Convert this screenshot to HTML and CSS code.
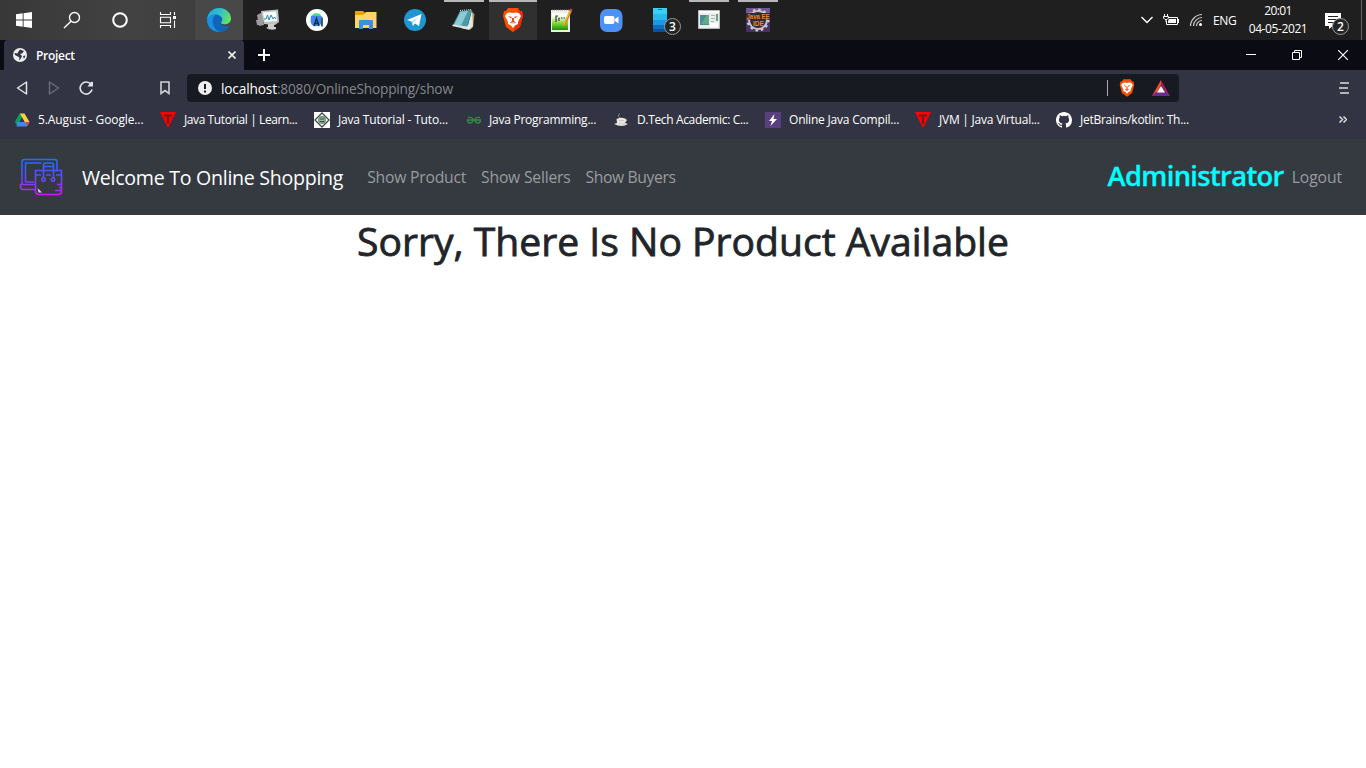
FILE: index.html
```html
<!DOCTYPE html>
<html lang="en">
<head>
<meta charset="utf-8">
<title>Project</title>
<link rel="stylesheet" href="styles.css">
</head>
<body>
<header class="taskbar">
  <div class="system-buttons">
    <span class="task"><svg width="16" height="16" viewBox="0 0 16 16" fill="#fff"><path d="M0 2.3 6.7 1.3V7.5H0zM7.6 1.2 16 0V7.5H7.6zM0 8.5H6.7V14.7L0 13.7zM7.6 8.5H16V16L7.6 14.8z"/></svg></span>
    <span class="task"><svg width="18" height="18" viewBox="0 0 18 18" fill="none" stroke="#fff" stroke-width="1.4"><circle cx="11.5" cy="6.5" r="5"/><path d="M8 10.2 1 17"/></svg></span>
    <span class="task"><svg width="18" height="18" viewBox="0 0 18 18" fill="none" stroke="#fff" stroke-width="2"><circle cx="9" cy="9" r="6.8"/></svg></span>
    <span class="task"><svg width="18" height="16" viewBox="0 0 18 16" fill="none" stroke="#fff" stroke-width="1.1"><path d="M1.5 0V2.5H11.5V0M1.5 16V13.5H11.5V16M1.5 5.2H11.5V10.8H1.5zM15.5 0V3M15.5 8.5V16"/><path fill="#fff" stroke="none" d="M14 4H17V7H14z"/></svg></span>
  </div>
  <div class="apps">
    <span class="task lit-edge"><svg width="24" height="24" viewBox="0 0 24 24"><defs><linearGradient id="eg" x1="0" y1=".2" x2="1" y2=".5"><stop offset="0" stop-color="#1ca9e3"/><stop offset=".55" stop-color="#35c1c7"/><stop offset="1" stop-color="#66e45b"/></linearGradient></defs><circle cx="12" cy="12" r="12" fill="#0f65b8"/><path fill="#1d8ee0" d="M0 12C1 7 5 6 9 6.5 6 9 5 12 6 16 7 20 10 23 13 24 5 24 0 19 0 12"/><path fill="url(#eg)" d="M0 11.5C1 4 6 0 12 0 19 0 24 5 24 10.5 24 15 20 17 16.5 16.3 14 16 13.5 15 14.4 13.9 17 11 14 7 9 6.5 5 6.2 1.5 8 0 11.5"/><path fill="#484848" d="M13.8 14.7C13.5 17.5 18 19.5 22.6 17.5L24 18V13C22 16 19 17 16.5 16.5 14.7 16 13.8 15.5 13.8 14.7"/></svg></span>
    <span class="task"><svg width="24" height="24" viewBox="0 0 24 24"><path fill="#9b9d9c" d="M1 7 6 4.5 8 17 3 18zM0 12 7 11 8 17 1 17z"/><path fill="#bfc2c3" d="M5 3 22 1.5 23 14 19 17 8 16z"/><path fill="#f9fcfd" d="M7 4.5 20 3.5 21 13 8.5 14z"/><path fill="none" stroke="#2687b8" stroke-width="1" d="M8 11H10L11.5 7 13 12 15 7 17 11 18.5 9 20 11"/><path fill="#ccc" d="M12 16H18V19H20V21Q15 23 10 20L12 19z"/></svg></span>
    <span class="task"><svg width="24" height="24" viewBox="0 0 24 24"><circle cx="12" cy="12" r="11" fill="#fff"/><path fill="#3ddc84" d="M6 8.500Q9 3.500 15 6L17 9H7z"/><path fill="#4285f4" d="M6 8H16.500V16Q11 20 7 17L5.5 14z"/><path fill="none" stroke="#073042" stroke-width="1.5" d="M9 18 11.500 10.5 14 18M10 15.5H13M17 9.5V18.5"/></svg></span>
    <span class="task"><svg width="24" height="24" viewBox="0 0 24 24"><path fill="#e7a200" d="M1 3H9L11 5V9H1z"/><path fill="#ffd665" d="M1 7H9L12 4H22.5V20H1z"/><path fill="#3b91d7" d="M5 13Q5 12 6 12H18Q19 12 19 13V21H15V17H9V21H5z"/></svg></span>
    <span class="task"><svg width="24" height="24" viewBox="0 0 24 24"><circle cx="12" cy="12" r="11" fill="#1e96d2"/><path fill="#fff" d="M4 12 18.5 6 16 18 12 15.5 10 18 8.5 13.5z"/><path fill="#b9d9ec" d="M8.5 13.5 15.8 8.8 10.4 14.4 10 18z"/></svg></span>
    <span class="task running"><svg width="24" height="24" viewBox="0 0 24 24"><path fill="#b09a5a" d="M20 4 22.5 6 21 19 18 22z"/><path fill="#dfe9ea" d="M20 2 21 18 17 22 9 20 16 17z"/><path fill="#4b9ba8" d="M8 3 20 2 15 19 1 17z"/><path fill="#8accd4" d="M8.5 4 16 3 9 17.5 2 17z"/><path fill="#dfe5e4" d="M1 16.5 15 18.5 14 21 0 18z"/><path stroke="#dde5e4" stroke-dasharray="1 1" d="M8 2.5 20 1.5"/></svg></span>
    <span class="task running lit-brave"><svg width="24" height="24" viewBox="0 0 24 24"><path fill="#ff5000" d="M7 0H17L19 3 21 3 22 8 19 19 12 24 5 19 2 8 3 3 5 3z"/><path fill="#e51b00" d="M17 0 19 3 21 3 22 8 19 19 12 24 15 13z" opacity=".6"/><path fill="#fff" d="M6 5 9 4.5 12 5 15 4.5 18 5 20 8 17 14 17 16 14 17.5 12 20 10 17.5 7 16 7 14 4 8z"/><path fill="#f04818" d="M7 8 11 9 10 10.5zM17 8 13 9 14 10.5zM11 10H13L13 13 15 14.5 12 16 9 14.5 11 13z"/><path fill="#fff" d="M10 14.5H14L12 16z"/></svg></span>
    <span class="task"><svg width="24" height="24" viewBox="0 0 24 24"><defs><linearGradient id="np" x1="0" y1="0" x2="0" y2="1"><stop offset=".2" stop-color="#f8fff5"/><stop offset=".55" stop-color="#96dd48"/><stop offset="1" stop-color="#149600"/></linearGradient></defs><path fill="#eee" d="M1 2H20V24H1z"/><path fill="url(#np)" d="M2 5H18V22H2z"/><path stroke="#888" stroke-dasharray="1 1" d="M2 2H19"/><path fill="none" stroke="#333" stroke-width="1.2" d="M6 14V8H8M9 9.5V13M11 10H12.500M13.500 10H15"/><path stroke="#d58a10" stroke-width="2.5" d="M14 18 21 2"/><path stroke="#fbc14d" d="M13.6 17 20 3"/><path stroke="#b94a51" stroke-width="2.5" d="M20.5 3 21.5 1"/></svg></span>
    <span class="task"><svg width="24" height="24" viewBox="0 0 24 24"><rect x="1" y="1" width="22.5" height="23" rx="7" fill="#4b91f7"/><rect x="5" y="8" width="10.5" height="8" rx="2" fill="#fff"/><path fill="#fff" d="M16 11 19.5 8.5V15.5L16 13z"/></svg></span>
    <span class="task badge-host"><svg width="24" height="24" viewBox="0 0 24 24"><path fill="#38d0f4" d="M5 0H19V6H5z"/><path fill="#28b8ed" d="M5 6H19V12H5z"/><path fill="#1b98df" d="M5 12H19V17H5z"/><path fill="#0c6fc4" d="M5 17H19V21H5z"/><path fill="#07529b" d="M5 21H19V24H5z"/><path stroke="#087bad" d="M10 1.5H14"/></svg><b class="badge">3</b></span>
    <span class="task running"><svg width="24" height="24" viewBox="0 0 24 24"><path fill="#ececec" stroke="#b9b9b9" d="M1.5 2.5H22.5V20.5H1.5z"/><path fill="#fff" d="M2 3H22V5H2z"/><path fill="#4a8c9c" d="M3 7H12V17H3z"/><path fill="#65ab86" d="M4 16 10 7H12V16z"/><path stroke="#a6b4bd" d="M14 7.5H18M14 10.5H18M14 13.5H17"/><path stroke="#388e59" stroke-width="1.5" d="M20 6V13"/><path fill="#fff" d="M13 15H21V19H13z"/></svg></span>
    <span class="task running"><svg class="javaee" width="24" height="24" viewBox="0 0 24 24"><path fill="#473168" d="M0 0H24V24H0z"/><path fill="#745798" d="M0 0H24V5L0 8z"/><circle cx="12" cy="12" r="9" fill="#302b35" stroke="#c5c5c8" stroke-width="2"/><circle cx="12" cy="12" r="10.5" fill="none" stroke="#d2d2d5" stroke-width="2" stroke-dasharray="2.4 3.1"/><path fill="#352b32" d="M0 5H24V11.5H0zM6 11H18V18H6z"/><g fill="#ef8428" font-family="Liberation Sans,sans-serif" font-weight="bold"><text x=".5" y="11.2" font-size="7" textLength="23" lengthAdjust="spacingAndGlyphs">Java EE</text><text x="7" y="17.5" font-size="7.5" textLength="11" lengthAdjust="spacingAndGlyphs">IDE</text></g></svg></span>
  </div>
  <div class="tray">
    <svg class="tray-icon" width="12" height="8" viewBox="0 0 12 8" fill="none" stroke="#fff" stroke-width="1.4"><path d="M.5 1 6 6.5 11.5 1"/></svg>
    <svg class="tray-icon" width="16" height="12" viewBox="0 0 16 12" fill="none" stroke="#fff"><path d="M5 3.5H14.5V10.5H3.5V7M15.5 5V9M1.5 0V2M4.5 0V2M.5 2.5H5.5V4L4 5.5H2L.5 4zM3 5.5V8"/><path fill="#fff" stroke="none" d="M6 5H13V9H5V7z"/></svg>
    <svg class="tray-icon" width="14" height="14" viewBox="0 0 14 14" fill="none" stroke="#ccc" stroke-width="1.2"><path d="M1.5 13C1.5 7 7 1.5 13 1.5M4.5 13C4.5 8.5 8.5 4.5 13 4.5M7.5 13C7.5 10 10 7.5 13 7.5"/><circle cx="11.5" cy="11.5" r="1.5" fill="#fff" stroke="none"/></svg>
    <span class="t t-eng">ENG</span>
    <div class="clock"><span class="t t-time">20:01</span><span class="t t-date">04-05-2021</span></div>
    <span class="notice badge-host"><svg width="17" height="17" viewBox="0 0 17 17"><path fill="#fff" d="M0 1H16V14H8L4 17V14H0z"/><path stroke="#222" d="M3 4.5H13M3 7.5H13M3 10.5H10"/></svg><b class="badge">2</b></span>
  </div>
</header>

<div class="tabstrip">
  <div class="tab">
    <svg width="14" height="14" viewBox="0 0 14 14"><circle cx="7" cy="7" r="7" fill="#eee"/><path fill="#323443" d="M7 1.5 11 3 9 5.5 7 6 9 8 8 10.5 6 12.5 6.5 9.5 2 7 1.5 5 4.5 5.5 5.5 3.5zM10 8 12.5 7.5 11 11z"/></svg>
    <span class="t t-tab">Project</span>
    <svg class="tab-close" width="8" height="8" viewBox="0 0 8 8" stroke="#eee" stroke-width="1.6"><path d="M.5 .5 7.5 7.5M7.5 .5 .5 7.5"/></svg>
  </div>
  <svg class="new-tab" width="12" height="12" viewBox="0 0 12 12" stroke="#fff" stroke-width="2"><path d="M6 0V12M0 6H12"/></svg>
  <div class="window-buttons">
    <svg width="10" height="10" viewBox="0 0 10 10" stroke="#fff"><path d="M0 4.5H10"/></svg>
    <svg width="10" height="10" viewBox="0 0 10 10" stroke="#fff" fill="none"><path d="M.5 2.5H7.5V9.5H.5zM2.5 2.5V.5H9.5V7.5H7.5"/></svg>
    <svg width="10" height="10" viewBox="0 0 10 10" stroke="#fff" stroke-width="1.2"><path d="M0 0 10 10M10 0 0 10"/></svg>
  </div>
</div>

<div class="toolbar">
  <svg class="nav-back" width="12" height="14" viewBox="0 0 12 14" fill="none" stroke="#e3e3e6" stroke-width="1.5" stroke-linejoin="round"><path d="M10.5 1V13L1.5 7z"/></svg>
  <svg class="nav-forward" width="12" height="14" viewBox="0 0 12 14" fill="none" stroke="#686a76" stroke-width="1.5" stroke-linejoin="round"><path d="M1.5 1V13L10.5 7z"/></svg>
  <svg class="nav-reload" width="14" height="14" viewBox="0 0 14 14" fill="none" stroke="#e3e3e6" stroke-width="1.6"><path d="M12 3.5A6 6 0 1 0 13 8.5"/><path fill="#e3e3e6" stroke="none" d="M8.5 5.5H14V1L12 .8z"/></svg>
  <svg class="nav-mark" width="10" height="14" viewBox="0 0 10 14" fill="none" stroke="#d0d1d5" stroke-width="1.6"><path d="M1 1H9V12.5L5 9.5 1 12.5z"/></svg>
  <div class="address">
    <svg width="14" height="14" viewBox="0 0 14 14"><circle cx="7" cy="7" r="7" fill="#eee"/><path stroke="#171a21" stroke-width="2" d="M7 3V8M7 9.5V11.5"/></svg>
    <span class="url"><span class="t t-host">localhost</span><span class="t t-path">:8080/OnlineShopping/show</span></span>
    <i class="divider"></i>
    <svg class="shield" width="16" height="18" viewBox="1 0 22 24"><path fill="#f45100" d="M7 0H17L19 3 21 3 22 8 19 19 12 24 5 19 2 8 3 3 5 3z"/><path fill="#fff" d="M6 5 9 4.5 12 5 15 4.5 18 5 20 8 17 14 17 16 14 17.5 12 20 10 17.5 7 16 7 14 4 8z"/><path fill="#e46a37" d="M7 8 11 9 10 10.5zM17 8 13 9 14 10.5zM11 10H13V13L15 14.5 12 16 9 14.5 11 13z"/></svg>
    <svg class="rewards" width="18" height="16" viewBox="0 0 18 16"><path fill="#ff4724" d="M9 0V5L5 13 0 16z"/><path fill="#9e1f63" d="M9 0 18 16 13 13 9 5z"/><path fill="#662d91" d="M0 16 4 12H14L18 16z"/><path fill="#fff" d="M9 6 13 12.5H5z"/></svg>
  </div>
  <svg class="menu" width="10" height="12" viewBox="0 0 10 12" stroke="#ddd" stroke-width="1.6"><path d="M1 1H10M0 6H9M1 11H10"/></svg>
</div>

<nav class="bookmarks">
  <a class="bm"><svg width="16" height="16" viewBox="0 0 16 16"><path fill="#0f9d58" d="M5.5 1.5H8L10 5 3.5 14 .8 10z"/><path fill="#ffcd40" d="M6 1.5H10.5L15.5 10H10.5z"/><path fill="#4285f4" d="M3.5 10H15.5L13 14.5H2.5z"/><path fill="#ea4335" d="M11.5 10H15.5L13.5 14z"/><path fill="#323443" d="M8 5.5 10.5 10H5.5z"/></svg><span class="t b1">5.August - Google...</span></a>
  <a class="bm"><svg width="16" height="16" viewBox="0 0 16 16"><path fill="#f00" d="M0 0H16L8 16z"/><path fill="#70191f" d="M4 2.5H12V4.5H9V12H7V4.5H4z"/></svg><span class="t b2">Java Tutorial | Learn...</span></a>
  <a class="bm"><svg width="16" height="16" viewBox="0 0 16 16"><path fill="#fff" d="M0 0H16V16H0z"/><path fill="none" stroke="#454545" stroke-width="1.3" d="M8 1 15 8 8 15 1 8z"/><circle cx="8" cy="8" r="3.3" fill="#9fb5a7" stroke="#508b66" stroke-width="1.2"/><path stroke="#454545" d="M6 7H10M6 9.5H10"/></svg><span class="t b3">Java Tutorial - Tuto...</span></a>
  <a class="bm"><svg width="16" height="16" viewBox="0 0 16 16" fill="none" stroke="#2f8d46" stroke-width="1.3"><path d="M2 5.500Q7 4.500 7 8.500 6.500 11 4 11 1.500 11 1.500 8H14.500Q14.500 11 12 11 9.500 11 9 8.500 9 4.500 14 5.500"/></svg><span class="t b4">Java Programming...</span></a>
  <a class="bm"><svg width="16" height="16" viewBox="0 0 16 16"><path fill="#e9e5df" d="M3.5 7Q8 5 12 6.5L14 8 12 11 15 12Q9 16 1 12L4 11z"/><path fill="none" stroke="#888" d="M7 6Q4 4 6.5 1.5"/><path stroke="#cdc7c1" d="M6 8.5H11M6 12H12"/></svg><span class="t b5">D.Tech Academic: C...</span></a>
  <a class="bm"><svg width="16" height="16" viewBox="0 0 16 16"><path fill="#57407c" d="M0 0H16V16H0z"/><path fill="#fff" d="M9.5 2 4 9H7L5.5 14 12 7H8.5z"/></svg><span class="t b6">Online Java Compil...</span></a>
  <a class="bm"><svg width="16" height="16" viewBox="0 0 16 16"><path fill="#f00" d="M0 0H16L8 16z"/><path fill="#70191f" d="M4 2.5H12V4.5H9V12H7V4.5H4z"/></svg><span class="t b7">JVM | Java Virtual...</span></a>
  <a class="bm"><svg width="16" height="16" viewBox="0 0 16 16" fill="#fff"><path d="M8 0C3.58 0 0 3.58 0 8c0 3.54 2.29 6.53 5.47 7.59.4.07.55-.17.55-.38 0-.19-.01-.82-.01-1.49-2.01.37-2.53-.49-2.69-.94-.09-.23-.48-.94-.82-1.13-.28-.15-.68-.52-.01-.53.63-.01 1.08.58 1.23.82.72 1.21 1.87.87 2.33.66.07-.52.28-.87.51-1.07-1.78-.2-3.64-.89-3.64-3.95 0-.87.31-1.59.82-2.15-.08-.2-.36-1.02.08-2.12 0 0 .67-.21 2.2.82a7.6 7.6 0 0 1 4 0c1.53-1.04 2.2-.82 2.2-.82.44 1.1.16 1.92.08 2.12.51.56.82 1.27.82 2.15 0 3.07-1.87 3.75-3.65 3.95.29.25.54.73.54 1.48 0 1.07-.01 1.93-.01 2.2 0 .21.15.46.55.38A8 8 0 0 0 16 8c0-4.42-3.58-8-8-8"/></svg><span class="t b8">JetBrains/kotlin: Th...</span></a>
  <svg class="overflow" width="8" height="7" viewBox="0 0 8 7" fill="none" stroke="#ddd" stroke-width="1.5"><path d="M.5 .5 3.5 3.5 .5 6.5M4.5 .5 7.5 3.5 4.5 6.5"/></svg>
</nav>

<nav class="navbar">
  <svg class="logo" width="44" height="38" viewBox="0 0 44 38" fill="none" stroke="url(#lg)" stroke-width="1.6"><defs><linearGradient id="lg" gradientUnits="userSpaceOnUse" x1="0" y1="0" x2="0" y2="38"><stop offset="0" stop-color="#1b72ff"/><stop offset=".5" stop-color="#5b4df4"/><stop offset="1" stop-color="#c81df3"/></linearGradient></defs><path d="M3 26V4Q3 1.5 5.5 1.5H35.5Q38 1.5 38 4V12M6.5 24V5H22.5M6.5 24H15M16.5 26.5H1.5V28Q1.5 31.5 4 31.5H16.5M16.5 12.5H42.5V33Q42.5 36.5 39 36.5H20Q16.5 36.5 16.5 33zM16.5 17H22M27 17H32M37 17H42.5M24.5 20V7Q24.5 5 26.5 5H32Q34.5 5 34.5 7V20M24.5 8.5H34.5M38 26.5H42M40 29.5H42M36 32.5H42"/><circle cx="24.5" cy="21.5" r="1.7"/><circle cx="34" cy="21.5" r="1.7"/><path stroke="none" fill="#e2c8f8" d="M18.5 30 23 34.5H19.5z"/></svg>
  <span class="t t-brand">Welcome To Online Shopping</span>
  <a class="t t-n1">Show Product</a><a class="t t-n2">Show Sellers</a><a class="t t-n3">Show Buyers</a>
  <span class="t t-admin">Administrator</span>
  <a class="t t-out">Logout</a>
</nav>

<main><h1 class="t t-h1">Sorry, There Is No Product Available</h1></main>
</body>
</html>
```
FILE: styles.css
```css
* { box-sizing: border-box; }
body { margin: 0; height: 768px; overflow: hidden; background: #fff; font-family: "Open Sans", "Noto Sans", sans-serif; }
svg { display: block; flex: none; }
.t { white-space: nowrap; flex: none; }

.taskbar { display: flex; height: 40px; background: linear-gradient(90deg, #383838 0, #424242 130px, #3c3c3c 243px, #1f1f1f 243px); color: #fff; }
.system-buttons { display: flex; width: 195px; }
.apps { display: flex; gap: 1px; }
.task { display: flex; width: 48px; height: 40px; align-items: center; justify-content: center; }
.running { background: linear-gradient(#b8b8b8, #b8b8b8) center top / 40px 2px no-repeat; }
.javaee { overflow: visible; }
.lit-edge { background: #484848; }
.lit-brave { background: linear-gradient(#b8b8b8, #b8b8b8) center top / 48px 2px no-repeat #303030; }
.badge-host { position: relative; }
.badge { position: absolute; left: 28px; top: 18px; width: 17px; height: 17px; border: 1px solid #999; border-radius: 50%; background: #252525; font: 600 12px/15px "Open Sans", sans-serif; text-align: center; }
.tray { display: flex; align-items: center; margin-left: auto; width: 221px; border-right: 1px solid #666; margin-right: 4px; font-size: 12px; }
.tray-icon { margin-right: 10px; }
.t-eng { width: 24px; letter-spacing: -.4px; }
.clock { display: flex; flex-direction: column; align-items: center; width: 60px; margin-left: 11px; line-height: 18px; }
.t-time { letter-spacing: -.6px; }
.t-date { letter-spacing: -.4px; }
.notice { margin-left: 17px; }
.notice .badge { left: 7px; top: 6px; }

.tabstrip { display: flex; height: 30px; align-items: center; background: #0b0b14; padding-left: 4px; }
.tab { display: flex; align-items: center; width: 240px; height: 30px; padding: 0 8px 0 9px; background: #323443; border-radius: 4px 4px 0 0; }
.t-tab { margin-left: 9px; color: #fff; font-size: 12px; font-weight: 600; letter-spacing: -.3px; }
.tab-close { margin-left: auto; }
.new-tab { margin-left: 14px; }
.window-buttons { display: flex; gap: 36px; margin-left: auto; margin-right: 18px; }

.toolbar { display: flex; height: 36px; align-items: center; background: #323443; padding: 0 17px 0 16px; }
.nav-forward { margin-left: 20px; }
.nav-reload { margin-left: 19px; }
.nav-mark { margin-left: 67px; }
.address { display: flex; align-items: center; width: 992px; height: 28px; margin-left: 17px; padding: 0 9px 0 11px; border-radius: 4px; background: #171a21; }
.url { display: flex; margin-left: 9px; font-size: 13.7px; color: #85878c; }
.t-host { color: #fff; letter-spacing: -.16px; }
.t-path { letter-spacing: -.2px; }
.divider { width: 1px; height: 16px; margin-left: auto; background: #aaa; }
.shield { margin-left: 11px; }
.rewards { margin-left: 17px; }
.menu { margin-left: auto; }

.bookmarks { display: grid; grid-template-columns: 146px 154px 152px 147px 152px 150px 141px 1fr auto; align-items: center; height: 33px; padding: 0 19px 6px 14px; background: #323443; color: #fff; font-size: 12px; }
.bm { display: flex; align-items: center; gap: 8px; }
.b1 { letter-spacing: -.12px; }
.b2 { letter-spacing: -.41px; }
.b3 { letter-spacing: -.17px; }
.b4 { margin-left: -1px; letter-spacing: -.24px; }
.b5 { letter-spacing: -.35px; }
.b6 { letter-spacing: -.2px; }
.b7 { letter-spacing: -.23px; }
.b8 { letter-spacing: -.27px; }

.navbar { display: flex; align-items: center; height: 76px; padding: 0 24px 0 19px; background: #343a40; color: #9a9c9f; font-size: 15.7px; }
.t-brand { margin-left: 19px; color: #fff; font-size: 19.6px; letter-spacing: -.28px; }
.t-n1 { margin-left: 24px; letter-spacing: -.22px; }
.t-n2 { margin-left: 15px; letter-spacing: -.21px; }
.t-n3 { margin-left: 15px; letter-spacing: -.37px; }
.t-admin { margin: 0 0 4px auto; color: #0ff; font-size: 27.3px; font-weight: 600; -webkit-text-stroke: .3px #0ff; letter-spacing: -.65px; }
.t-out { margin-left: 8px; letter-spacing: -.08px; }

.t-h1 { margin: 2px 0 0; color: #212529; font-size: 39.1px; line-height: 48px; font-weight: 400; -webkit-text-stroke: .8px #212529; text-align: center; }
```
